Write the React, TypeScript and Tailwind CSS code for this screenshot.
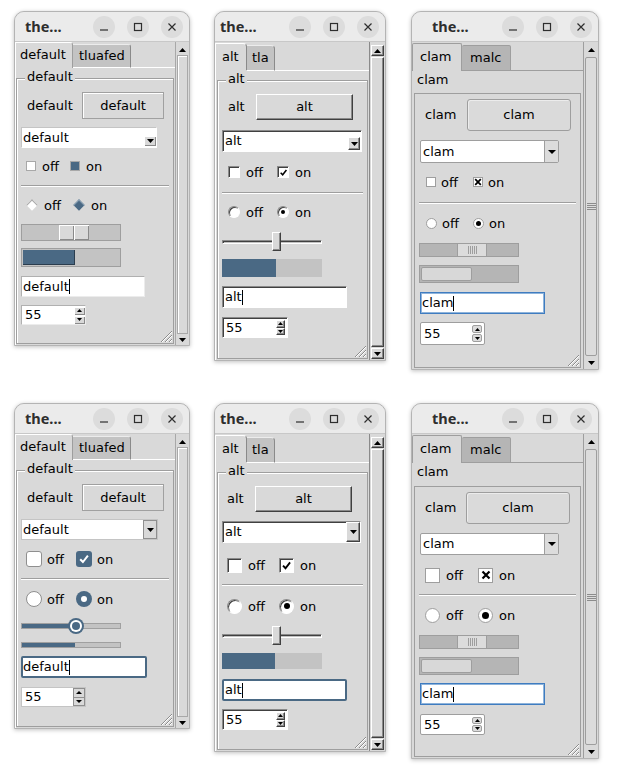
import type { ReactNode } from 'react'

const SANS = "font-['DejaVu_Sans',sans-serif]"
const SUNK = 'border border-t-[#8a8a8a] border-l-[#8a8a8a] border-r-white border-b-white shadow-[inset_1px_1px_0_#404040]'
const RAISED = 'border border-t-white border-l-white border-r-[#404040] border-b-[#404040] shadow-[inset_-1px_-1px_0_#8a8a8a]'
const BEVEL = 'shadow-[inset_1px_1px_0_#fff,inset_-1px_-1px_0_#8a8a8a]'

type Cfg = {
  lf: string
  btn: string
  lab: string
  cb: string
  chk: string
  sep: string
  rad: string
  scl: string
  prg: string
  ent: string
  spn: string
  row: string
  item: string
  ritem: string
  txt: string
}

const W1: Cfg = { lf: 'mt-[10px]', btn: 'mt-[13px]', lab: 'w-[61px] pl-[6px]', cb: 'mt-[8px]', chk: 'mt-[9px]', sep: 'mt-[10px]', rad: 'mt-[9px]', scl: 'mt-[10px]', prg: 'mt-[7px]', ent: 'mt-[9px]', spn: 'mt-[8px]', row: 'pl-[5px]', item: 'w-[44px]', ritem: 'w-[47px]', txt: 'ml-[6px]' }
const W4: Cfg = { lf: 'mt-[10px]', btn: 'mt-[13px]', lab: 'w-[61px] pl-[6px]', cb: 'mt-[8px]', chk: 'mt-[10px]', sep: 'mt-[10px]', rad: 'mt-[10px]', scl: 'mt-[10px]', prg: 'mt-[8px]', ent: 'mt-[8px]', spn: 'mt-[9px]', row: 'pl-[5px]', item: 'w-[50px]', ritem: 'w-[50px]', txt: 'ml-[5px]' }
const W2: Cfg = { lf: 'mt-[9px]', btn: 'mt-[13px]', lab: 'w-[34px] pl-[6px]', cb: 'mt-[10px]', chk: 'mt-[11px]', sep: 'mt-[11px]', rad: 'mt-[9px]', scl: 'mt-[11px]', prg: 'mt-[8px]', ent: 'mt-[9px]', spn: 'mt-[9px]', row: 'pl-[6px]', item: 'w-[49px]', ritem: 'w-[49px]', txt: 'ml-[6px]' }
const W5: Cfg = { lf: 'mt-[9px]', btn: 'mt-[13px]', lab: 'w-[33px] pl-[5px]', cb: 'mt-[9px]', chk: 'mt-[13px]', sep: 'mt-[10px]', rad: 'mt-[11px]', scl: 'mt-[11px]', prg: 'mt-[8px]', ent: 'mt-[10px]', spn: 'mt-[8px]', row: 'pl-[5px]', item: 'w-[52px]', ritem: 'w-[52px]', txt: 'ml-[6px]' }
const W3: Cfg = { lf: 'mt-[5px]', btn: 'mt-[5px]', lab: 'w-[48px] pl-[6px]', cb: 'mt-[9px]', chk: 'mt-[10px]', sep: 'mt-[11px]', rad: 'mt-[10px]', scl: 'mt-[11px]', prg: 'mt-[8px]', ent: 'mt-[9px]', spn: 'mt-[8px]', row: 'pl-[7px]', item: 'w-[47px]', ritem: 'w-[47px]', txt: 'ml-[5px]' }
const W6: Cfg = { lf: 'mt-[6px]', btn: 'mt-[5px]', lab: 'w-[47px] pl-[6px]', cb: 'mt-[9px]', chk: 'mt-[11px]', sep: 'mt-[10px]', rad: 'mt-[10px]', scl: 'mt-[11px]', prg: 'mt-[8px]', ent: 'mt-[8px]', spn: 'mt-[9px]', row: 'pl-[6px]', item: 'w-[53px]', ritem: 'w-[53px]', txt: 'ml-[6px]' }

function Tri({ up, w = 7, h = 4 }: { up?: boolean; w?: number; h?: number }) {
  return (
    <svg width={w} height={h} viewBox={`0 0 ${w} ${h}`}>
      <path d={up ? `M0 ${h}L${w / 2} 0L${w} ${h}Z` : `M0 0H${w}L${w / 2} ${h}Z`} fill="#000" />
    </svg>
  )
}

function Check({ s, color = '#000' }: { s: number; color?: string }) {
  return (
    <svg width={s} height={s} viewBox="0 0 12 12">
      <path d="M2.2 6.2L4.9 9L9.9 2.6" fill="none" stroke={color} strokeWidth="2" />
    </svg>
  )
}

function Cross({ s }: { s: number }) {
  return (
    <svg width={s} height={s} viewBox="0 0 10 10">
      <path d="M1.5 1.5L8.5 8.5M8.5 1.5L1.5 8.5" stroke="#000" strokeWidth="2.2" />
    </svg>
  )
}

function Grip() {
  return (
    <svg width="14" height="14" viewBox="0 0 14 14" className="absolute bottom-0 right-0">
      <path d="M13 2L2 13M13 6L6 13M13 10L10 13" stroke="#8c8c8c" />
      <path d="M13 3L3 13M13 7L7 13M13 11L11 13" stroke="#fff" />
    </svg>
  )
}

function Cursor() {
  return <span className="h-[15px] w-px bg-black" />
}

function Ctl({ children }: { children: ReactNode }) {
  return (
    <div className="flex h-[22px] w-[22px] items-center justify-center rounded-full bg-[#dcdcdc]">
      <svg width="10" height="10" viewBox="0 0 10 10" fill="none" stroke="#2e2e2e" strokeWidth="1.2">
        {children}
      </svg>
    </div>
  )
}

function TitleBar({ pad }: { pad: string }) {
  return (
    <div className="flex h-[30px] shrink-0 items-center rounded-t-[9px] border-b border-[#c8c8c8] bg-[#ebebeb] pr-[6px]">
      <span className={`${pad} font-['Noto_Sans',sans-serif] text-[14.5px] font-bold leading-none text-[#2e2e2e]`}>the...</span>
      <div className="ml-auto flex gap-[12px]">
        <Ctl>
          <path d="M1 8H9" />
        </Ctl>
        <Ctl>
          <rect x="1.5" y="1.5" width="7" height="7" />
        </Ctl>
        <Ctl>
          <path d="M1.5 1.5L8.5 8.5M8.5 1.5L1.5 8.5" />
        </Ctl>
      </div>
    </div>
  )
}

function Window({ cls, pad, scroll, children }: { cls: string; pad: string; scroll: ReactNode; children: ReactNode }) {
  return (
    <div className={`${cls} flex shrink-0 flex-col rounded-t-[10px] border border-[#b4b4b4] bg-[#d9d9d9] shadow-[0_1px_4px_rgba(0,0,0,0.25)]`}>
      <TitleBar pad={pad} />
      <div className="flex min-h-0 flex-1">
        <div className="flex min-w-0 flex-1 flex-col">{children}</div>
        {scroll}
      </div>
    </div>
  )
}

function ScrollDefault() {
  return (
    <div className="flex w-[14px] shrink-0 flex-col border-l border-[#a8a8a8] pt-[2px]">
      <div className="flex h-[11px] items-center justify-center">
        <Tri up />
      </div>
      <div className="mx-px flex-1 border border-[#a8a8a8] shadow-[inset_1px_1px_0_#fff]" />
      <div className="flex h-[11px] items-center justify-center">
        <Tri />
      </div>
    </div>
  )
}

function ScrollAlt() {
  return (
    <div className="flex w-[16px] shrink-0 flex-col border-l border-[#8a8a8a] px-px pb-px pt-[3px]">
      <div className={`${RAISED} flex h-[11px] items-center justify-center bg-[#d9d9d9]`}>
        <Tri up />
      </div>
      <div className={`${RAISED} mt-px flex-1 bg-[#d9d9d9]`} />
      <div className={`${RAISED} mt-px flex h-[11px] items-center justify-center bg-[#d9d9d9]`}>
        <Tri />
      </div>
    </div>
  )
}

function ScrollClam() {
  return (
    <div className="flex w-[15px] shrink-0 flex-col border-l border-[#9e9e9e] pt-[2px]">
      <div className="flex h-[12px] items-center justify-center">
        <Tri up />
      </div>
      <div className="m-px flex flex-1 flex-col items-center justify-center gap-px rounded-[2px] border border-[#9e9e9e] bg-[#dcdcdc]">
        <div className="h-px w-[9px] bg-[#8c8c8c]" />
        <div className="h-px w-[9px] bg-[#8c8c8c]" />
        <div className="h-px w-[9px] bg-[#8c8c8c]" />
        <div className="h-px w-[9px] bg-[#8c8c8c]" />
      </div>
      <div className="flex h-[12px] items-center justify-center">
        <Tri />
      </div>
    </div>
  )
}

function Choices({ cls, item, txt, off, on }: { cls: string; item: string; txt: string; off: ReactNode; on: ReactNode }) {
  return (
    <div className={`${cls} flex h-[18px] shrink-0 items-center`}>
      <div className={`${item} flex shrink-0 items-center`}>
        {off}
        <span className={`${txt} leading-none`}>off</span>
      </div>
      <div className="flex items-center">
        {on}
        <span className={`${txt} leading-none`}>on</span>
      </div>
    </div>
  )
}

function Sep({ cls }: { cls: string }) {
  return <div className={`${cls} h-[2px] shrink-0 border-b border-t border-b-white border-t-[#9e9e9e]`} />
}

function DefaultContent({ c, nu }: { c: Cfg; nu?: boolean }) {
  return (
    <>
      <div className="flex h-[26px] shrink-0 items-end">
        <div className="flex h-[26px] w-[58px] items-center rounded-tr-[3px] border-l border-r border-t border-l-white border-r-[#9e9e9e] border-t-white pb-px pl-[4px]">default</div>
        <div className="flex h-[24px] w-[58px] items-center rounded-tr-[3px] border-b border-r border-t border-b-white border-r-[#8a8a8a] border-t-[#ececec] bg-[#c3c3c3] pl-[6px]">tluafed</div>
        <div className="h-px flex-1 bg-white" />
      </div>
      <div className="flex flex-1 flex-col border-l border-white pb-px pr-px">
        <div className={`${c.lf} relative flex flex-1 flex-col border border-[#9e9e9e] px-[4px] shadow-[inset_1px_1px_0_#fff]`}>
          <span className="absolute -top-[11px] left-[8px] bg-[#d9d9d9] px-[2px] leading-[18px]">default</span>
          <div className={`${c.btn} flex h-[27px] shrink-0 items-center`}>
            <span className={c.lab}>default</span>
            <div className="flex h-full w-[82px] items-center justify-center border border-[#a0a0a0] shadow-[inset_1px_1px_0_#fff]">default</div>
          </div>
          {nu ? (
            <div className={`${c.cb} flex h-[21px] w-[137px] shrink-0 border border-[#c4c4c4] bg-white`}>
              <span className="flex flex-1 items-center pl-px">default</span>
              <div className="flex w-[14px] items-center justify-center border border-[#8f8f8f] bg-[#d9d9d9]">
                <Tri />
              </div>
            </div>
          ) : (
            <div className={`${c.cb} flex h-[21px] w-[136px] shrink-0 border border-[#c4c4c4] border-b-white border-r-white bg-white`}>
              <span className="flex flex-1 items-center pl-px">default</span>
              <div className={`${BEVEL} mb-px flex h-[10px] w-[12px] items-center justify-center self-end bg-[#d9d9d9]`}>
                <Tri />
              </div>
            </div>
          )}
          {nu ? (
            <Choices
              cls={`${c.chk} ${c.row}`}
              item={c.item}
              txt={c.txt}
              off={<div className="h-[16px] w-[16px] rounded-[3px] border border-[#8f8f8f] bg-white" />}
              on={
                <div className="flex h-[16px] w-[16px] items-center justify-center rounded-[3px] bg-[#4a6984]">
                  <Check s={12} color="#fff" />
                </div>
              }
            />
          ) : (
            <Choices
              cls={`${c.chk} ${c.row}`}
              item={c.item}
              txt={c.txt}
              off={<div className="h-[10px] w-[10px] border border-[#a8a8a8] bg-white" />}
              on={<div className="h-[10px] w-[10px] border border-[#a8a8a8] bg-[#4a6984]" />}
            />
          )}
          <Sep cls={c.sep} />
          {nu ? (
            <Choices
              cls={`${c.rad} ${c.row}`}
              item={c.ritem}
              txt={c.txt}
              off={<div className="h-[16px] w-[16px] rounded-full border border-[#8f8f8f] bg-white" />}
              on={
                <div className="flex h-[16px] w-[16px] items-center justify-center rounded-full bg-[#4a6984]">
                  <div className="h-[6px] w-[6px] rounded-full bg-white" />
                </div>
              }
            />
          ) : (
            <Choices
              cls={`${c.rad} ${c.row}`}
              item={c.ritem}
              txt={c.txt}
              off={
                <div className="flex h-[12px] w-[12px] items-center justify-center">
                  <div className="h-[8px] w-[8px] rotate-45 border-l border-t border-[#a8a8a8] bg-white" />
                </div>
              }
              on={
                <div className="flex h-[12px] w-[12px] items-center justify-center">
                  <div className="h-[8px] w-[8px] rotate-45 border-l border-t border-[#8aa0b4] bg-[#4a6984]" />
                </div>
              }
            />
          )}
          {nu ? (
            <div className={`${c.scl} relative flex h-[16px] w-[100px] shrink-0 items-center`}>
              <div className="flex h-[6px] w-full border border-[#a0a0a0] bg-[#c3c3c3]">
                <div className="h-full w-[53px] bg-[#4a6984]" />
              </div>
              <div className="absolute left-[47px] top-0 flex h-[16px] w-[16px] items-center justify-center rounded-full bg-[#4a6984]">
                <div className="flex h-[12px] w-[12px] items-center justify-center rounded-full bg-white">
                  <div className="h-[8px] w-[8px] rounded-full bg-[#4a6984]" />
                </div>
              </div>
            </div>
          ) : (
            <div className={`${c.scl} flex h-[17px] w-[100px] shrink-0 border border-[#9e9e9e] bg-[#c3c3c3] pl-[37px]`}>
              <div className={`${BEVEL} h-full w-[15px] bg-[#d9d9d9]`} />
              <div className={`${BEVEL} h-full w-[15px] bg-[#d9d9d9]`} />
            </div>
          )}
          {nu ? (
            <div className={`${c.prg} flex h-[6px] w-[100px] shrink-0 border border-[#a0a0a0] bg-[#c3c3c3]`}>
              <div className="h-full w-[53px] bg-[#4a6984]" />
            </div>
          ) : (
            <div className={`${c.prg} flex h-[19px] w-[100px] shrink-0 border border-[#9e9e9e] bg-[#c3c3c3] p-px`}>
              <div className="h-full w-[52px] border-b border-r border-b-[#2b3d4e] border-r-[#2b3d4e] bg-[#4a6984]" />
            </div>
          )}
          {nu ? (
            <div className={`${c.ent} flex h-[22px] w-[126px] shrink-0 items-center rounded-[2px] border-2 border-[#4a6984] bg-white`}>
              <span>default</span>
              <Cursor />
            </div>
          ) : (
            <div className={`${c.ent} flex h-[21px] w-[124px] shrink-0 items-center border border-[#b0b0b0] border-b-[#ececec] border-r-[#ececec] bg-white pl-px`}>
              <span>default</span>
              <Cursor />
            </div>
          )}
          {nu ? (
            <div className={`${c.spn} flex h-[20px] w-[65px] shrink-0 border border-[#c4c4c4] bg-white`}>
              <span className="flex flex-1 items-center pl-[3px]">55</span>
              <div className="flex w-[12px] flex-col">
                <div className="flex flex-1 items-center justify-center border border-[#8f8f8f] bg-[#d9d9d9]">
                  <Tri up w={6} h={3} />
                </div>
                <div className="flex flex-1 items-center justify-center border border-t-0 border-[#8f8f8f] bg-[#d9d9d9]">
                  <Tri w={6} h={3} />
                </div>
              </div>
            </div>
          ) : (
            <div className={`${c.spn} flex h-[20px] w-[65px] shrink-0 border border-[#b0b0b0] border-b-[#ececec] border-r-[#ececec] bg-white`}>
              <span className="flex flex-1 items-center pl-[3px]">55</span>
              <div className="flex w-[11px] flex-col justify-center gap-px">
                <div className={`${BEVEL} flex h-[8px] items-center justify-center bg-[#d9d9d9]`}>
                  <Tri up w={5} h={3} />
                </div>
                <div className={`${BEVEL} flex h-[8px] items-center justify-center bg-[#d9d9d9]`}>
                  <Tri w={5} h={3} />
                </div>
              </div>
            </div>
          )}
          <Grip />
        </div>
      </div>
    </>
  )
}

function AltContent({ c, nu }: { c: Cfg; nu?: boolean }) {
  return (
    <>
      <div className="flex h-[29px] shrink-0 items-end">
        <div className="flex h-[28px] w-[32px] items-center rounded-tr-[4px] border-l border-r border-t border-l-white border-r-[#8a8a8a] border-t-white pb-[2px] pl-[6px]">alt</div>
        <div className="flex h-[26px] w-[28px] items-center rounded-tr-[4px] border-b border-r border-t border-b-white border-r-[#8a8a8a] border-t-[#ececec] bg-[#c3c3c3] pl-[5px]">tla</div>
        <div className="h-px flex-1 bg-white" />
      </div>
      <div className="flex flex-1 flex-col border-l border-white pb-px pl-px pr-px">
        <div className={`${c.lf} relative flex flex-1 flex-col border border-[#9e9e9e] px-[4px] shadow-[inset_1px_1px_0_#fff]`}>
          <span className="absolute -top-[11px] left-[8px] bg-[#d9d9d9] px-[2px] leading-[18px]">alt</span>
          <div className={`${c.btn} flex h-[26px] shrink-0 items-center`}>
            <span className={c.lab}>alt</span>
            <div className={`${RAISED} flex h-full w-[97px] items-center justify-center bg-[#d9d9d9]`}>alt</div>
          </div>
          {nu ? (
            <div className={`${c.cb} ${SUNK} flex h-[22px] w-[139px] shrink-0 bg-white`}>
              <span className="flex flex-1 items-center pl-[2px]">alt</span>
              <div className={`${RAISED} flex w-[14px] items-center justify-center bg-[#d9d9d9]`}>
                <Tri />
              </div>
            </div>
          ) : (
            <div className={`${c.cb} ${SUNK} flex h-[22px] w-[140px] shrink-0 bg-white`}>
              <span className="flex flex-1 items-center pl-[2px]">alt</span>
              <div className={`${RAISED} mb-px mr-px flex h-[13px] w-[12px] items-center justify-center self-end bg-[#d9d9d9]`}>
                <Tri />
              </div>
            </div>
          )}
          {nu ? (
            <Choices
              cls={`${c.chk} ${c.row}`}
              item={c.item}
              txt={c.txt}
              off={<div className={`${SUNK} h-[15px] w-[15px] bg-white`} />}
              on={
                <div className={`${SUNK} flex h-[15px] w-[15px] items-center justify-center bg-white`}>
                  <Check s={11} />
                </div>
              }
            />
          ) : (
            <Choices
              cls={`${c.chk} ${c.row}`}
              item={c.item}
              txt={c.txt}
              off={<div className={`${SUNK} h-[12px] w-[12px] bg-white`} />}
              on={
                <div className={`${SUNK} flex h-[12px] w-[12px] items-center justify-center bg-white`}>
                  <Check s={9} />
                </div>
              }
            />
          )}
          <Sep cls={c.sep} />
          {nu ? (
            <Choices
              cls={`${c.rad} ${c.row}`}
              item={c.ritem}
              txt={c.txt}
              off={<div className={`${SUNK} h-[15px] w-[15px] rounded-full bg-white`} />}
              on={
                <div className={`${SUNK} flex h-[15px] w-[15px] items-center justify-center rounded-full bg-white`}>
                  <div className="h-[6px] w-[6px] rounded-full bg-black" />
                </div>
              }
            />
          ) : (
            <Choices
              cls={`${c.rad} ${c.row}`}
              item={c.ritem}
              txt={c.txt}
              off={<div className={`${SUNK} h-[12px] w-[12px] rounded-full bg-white`} />}
              on={
                <div className={`${SUNK} flex h-[12px] w-[12px] items-center justify-center rounded-full bg-white`}>
                  <div className="h-[4px] w-[4px] rounded-full bg-black" />
                </div>
              }
            />
          )}
          <div className={`${c.scl} relative flex h-[19px] w-[100px] shrink-0 items-center`}>
            <div className={`${SUNK} h-[4px] w-full bg-[#c3c3c3]`} />
            <div className={`${RAISED} absolute left-[50px] top-0 h-[19px] w-[9px] bg-[#d9d9d9]`} />
          </div>
          {nu ? (
            <div className={`${c.prg} flex h-[16px] w-[100px] shrink-0 bg-[#c3c3c3]`}>
              <div className="h-full w-[53px] bg-[#4a6984]" />
            </div>
          ) : (
            <div className={`${c.prg} flex h-[18px] w-[100px] shrink-0 bg-[#c3c3c3]`}>
              <div className="h-full w-[54px] bg-[#4a6984]" />
            </div>
          )}
          {nu ? (
            <div className={`${c.ent} flex h-[22px] w-[125px] shrink-0 items-center rounded-[2px] border-2 border-[#4a6984] bg-white pl-px`}>
              <span>alt</span>
              <Cursor />
            </div>
          ) : (
            <div className={`${c.ent} ${SUNK} flex h-[22px] w-[125px] shrink-0 items-center bg-white pl-[2px]`}>
              <span>alt</span>
              <Cursor />
            </div>
          )}
          <div className={`${c.spn} ${SUNK} flex h-[21px] w-[66px] shrink-0 bg-white`}>
            <span className="flex flex-1 items-center pl-[3px]">55</span>
            <div className="flex w-[11px] flex-col py-[2px] pr-[2px]">
              <div className={`${RAISED} flex flex-1 items-center justify-center bg-[#d9d9d9]`}>
                <Tri up w={5} h={3} />
              </div>
              <div className={`${RAISED} flex flex-1 items-center justify-center bg-[#d9d9d9]`}>
                <Tri w={5} h={3} />
              </div>
            </div>
          </div>
          <Grip />
        </div>
      </div>
    </>
  )
}

function ClamContent({ c, nu }: { c: Cfg; nu?: boolean }) {
  return (
    <>
      <div className="flex h-[29px] shrink-0 items-end">
        <div className="flex h-[28px] w-[50px] items-center rounded-t-[2px] border-l border-r border-t border-[#9e9e9e] pb-px pl-[7px]">clam</div>
        <div className="flex h-[26px] w-[49px] items-center rounded-t-[2px] border border-l-0 border-[#9e9e9e] bg-[#b5b5b5] pl-[8px]">malc</div>
        <div className="h-px flex-1 bg-[#9e9e9e]" />
      </div>
      <div className="flex flex-1 flex-col px-[2px] pb-px">
        <span className="mt-px shrink-0 pl-[3px] leading-[16px]">clam</span>
        <div className={`${c.lf} relative flex flex-1 flex-col border border-[#9e9e9e] px-[4px]`}>
          <div className={`${c.btn} flex h-[32px] shrink-0 items-center`}>
            <span className={c.lab}>clam</span>
            <div className="flex h-full w-[104px] items-center justify-center rounded-[3px] border border-[#9e9e9e] bg-[#dadada] shadow-[inset_1px_1px_0_#ececec]">clam</div>
          </div>
          <div className={`${c.cb} ${nu ? 'h-[22px]' : 'h-[23px]'} ml-px flex w-[139px] shrink-0 rounded-[2px] border border-[#9e9e9e] bg-white`}>
            <span className="flex flex-1 items-center pl-[2px]">clam</span>
            <div className="flex w-[14px] items-center justify-center border-l border-[#9e9e9e] bg-[#dcdcdc]">
              <Tri w={8} h={4} />
            </div>
          </div>
          {nu ? (
            <Choices
              cls={`${c.chk} ${c.row}`}
              item={c.item}
              txt={c.txt}
              off={<div className="h-[15px] w-[15px] border border-[#9e9e9e] bg-white" />}
              on={
                <div className="flex h-[15px] w-[15px] items-center justify-center border border-[#9e9e9e] bg-white">
                  <Cross s={10} />
                </div>
              }
            />
          ) : (
            <Choices
              cls={`${c.chk} ${c.row}`}
              item={c.item}
              txt={c.txt}
              off={<div className="h-[10px] w-[10px] border border-[#9e9e9e] bg-white" />}
              on={
                <div className="flex h-[10px] w-[10px] items-center justify-center border border-[#9e9e9e] bg-white">
                  <Cross s={8} />
                </div>
              }
            />
          )}
          <Sep cls={c.sep} />
          {nu ? (
            <Choices
              cls={`${c.rad} ${c.row}`}
              item={c.ritem}
              txt={c.txt}
              off={<div className="h-[15px] w-[15px] rounded-full border border-[#9e9e9e] bg-white" />}
              on={
                <div className="flex h-[15px] w-[15px] items-center justify-center rounded-full border border-[#9e9e9e] bg-white">
                  <div className="h-[7px] w-[7px] rounded-full bg-black" />
                </div>
              }
            />
          ) : (
            <Choices
              cls={`${c.rad} ${c.row}`}
              item={c.ritem}
              txt={c.txt}
              off={<div className="h-[11px] w-[11px] rounded-full border border-[#9e9e9e] bg-white" />}
              on={
                <div className="flex h-[11px] w-[11px] items-center justify-center rounded-full border border-[#9e9e9e] bg-white">
                  <div className="h-[5px] w-[5px] rounded-full bg-black" />
                </div>
              }
            />
          )}
          <div className={`${c.scl} flex h-[14px] w-[100px] shrink-0 border border-[#9e9e9e] bg-[#b5b5b5] pl-[37px]`}>
            <div className="flex h-full w-[30px] items-center justify-center gap-px border-x border-[#9e9e9e] bg-[#dcdcdc]">
              <div className="h-[8px] w-px bg-[#9e9e9e]" />
              <div className="h-[8px] w-px bg-[#9e9e9e]" />
              <div className="h-[8px] w-px bg-[#9e9e9e]" />
              <div className="h-[8px] w-px bg-[#9e9e9e]" />
              <div className="h-[8px] w-px bg-[#9e9e9e]" />
            </div>
          </div>
          <div className={`${c.prg} flex h-[18px] w-[100px] shrink-0 border border-[#9e9e9e] bg-[#b5b5b5] p-px`}>
            <div className="h-full w-[51px] rounded-[2px] border border-[#9e9e9e] bg-[#d8d8d8]" />
          </div>
          <div className={`${c.ent} ml-px flex h-[22px] w-[125px] shrink-0 items-center border border-[#3f7cc0] bg-white pl-px shadow-[inset_0_0_0_1px_#8fb4db]`}>
            <span>clam</span>
            <Cursor />
          </div>
          <div className={`${c.spn} ${nu ? 'h-[21px]' : 'h-[23px]'} ml-px flex w-[65px] shrink-0 rounded-[2px] border border-[#9e9e9e] bg-white`}>
            <span className="flex flex-1 items-center pl-[3px]">55</span>
            <div className="flex w-[12px] flex-col gap-px py-[2px] pr-[2px]">
              <div className="flex flex-1 items-center justify-center rounded-[2px] border border-[#9e9e9e] bg-[#dcdcdc]">
                <Tri up w={5} h={3} />
              </div>
              <div className="flex flex-1 items-center justify-center rounded-[2px] border border-[#9e9e9e] bg-[#dcdcdc]">
                <Tri w={5} h={3} />
              </div>
            </div>
          </div>
          <Grip />
        </div>
      </div>
    </>
  )
}

export default function App() {
  return (
    <div className={`${SANS} min-h-[780px] w-[620px] bg-white text-[13px] text-black`}>
      <div className="flex items-start pl-[14px] pt-[11px]">
        <Window cls="h-[335px] w-[176px]" pad="pl-[10px]" scroll={<ScrollDefault />}>
          <DefaultContent c={W1} />
        </Window>
        <Window cls="ml-[24px] h-[350px] w-[172px]" pad="pl-[5px]" scroll={<ScrollAlt />}>
          <AltContent c={W2} />
        </Window>
        <Window cls="ml-[25px] h-[359px] w-[188px]" pad="pl-[20px]" scroll={<ScrollClam />}>
          <ClamContent c={W3} />
        </Window>
      </div>
      <div className="mt-[33px] flex items-start pl-[14px]">
        <Window cls="h-[326px] w-[176px]" pad="pl-[10px]" scroll={<ScrollDefault />}>
          <DefaultContent c={W4} nu />
        </Window>
        <Window cls="ml-[24px] h-[349px] w-[172px]" pad="pl-[5px]" scroll={<ScrollAlt />}>
          <AltContent c={W5} nu />
        </Window>
        <Window cls="ml-[25px] h-[356px] w-[188px]" pad="pl-[20px]" scroll={<ScrollClam />}>
          <ClamContent c={W6} nu />
        </Window>
      </div>
    </div>
  )
}
